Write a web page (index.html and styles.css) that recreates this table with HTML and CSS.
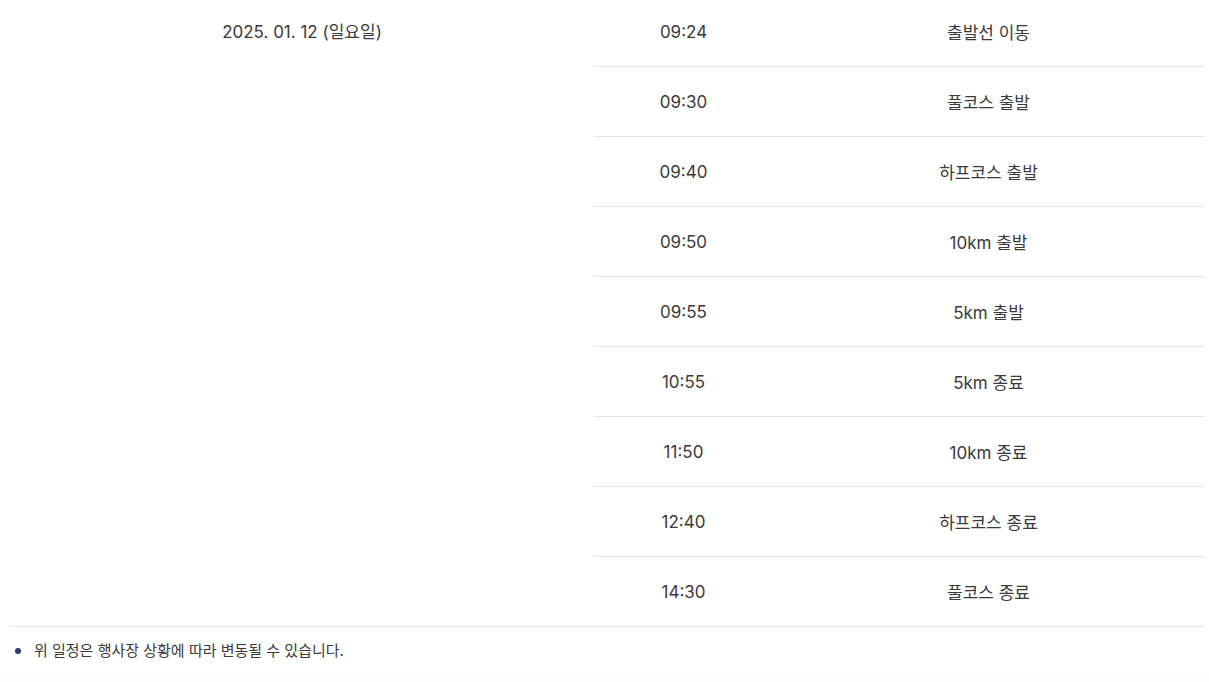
FILE: index.html
```html
<!DOCTYPE html>
<html lang="ko">
<head>
    <meta charset="UTF-8">
    <meta name="viewport" content="width=device-width, initial-scale=1.0">
    <title>대회 일정</title>
    <link rel="stylesheet" href="styles.css">
</head>
<body>
    <div class="schedule">
        <table class="scheduleTable">
            <tbody>
                <tr>
                    <td class="dateCell" rowspan="9">2025. 01. 12 (일요일)</td>
                    <td class="timeCell">09:24</td>
                    <td class="eventCell">출발선 이동</td>
                </tr>
                <tr>
                    <td class="timeCell">09:30</td>
                    <td class="eventCell">풀코스 출발</td>
                </tr>
                <tr>
                    <td class="timeCell">09:40</td>
                    <td class="eventCell">하프코스 출발</td>
                </tr>
                <tr>
                    <td class="timeCell">09:50</td>
                    <td class="eventCell">10km 출발</td>
                </tr>
                <tr>
                    <td class="timeCell">09:55</td>
                    <td class="eventCell">5km 출발</td>
                </tr>
                <tr>
                    <td class="timeCell">10:55</td>
                    <td class="eventCell">5km 종료</td>
                </tr>
                <tr>
                    <td class="timeCell">11:50</td>
                    <td class="eventCell">10km 종료</td>
                </tr>
                <tr>
                    <td class="timeCell">12:40</td>
                    <td class="eventCell">하프코스 종료</td>
                </tr>
                <tr>
                    <td class="timeCell">14:30</td>
                    <td class="eventCell">풀코스 종료</td>
                </tr>
            </tbody>
        </table>

        <ul class="notes">
            <li>위 일정은 행사장 상황에 따라 변동될 수 있습니다.</li>
        </ul>
    </div>
    <div class="nextSection"></div>
</body>
</html>
```

FILE: styles.css
```css
body, html {
    margin: 0;
    background: #fff;
    font-family: Inter, "Noto Sans CJK KR", sans-serif;
    color: #3a3a3a;
}

.schedule {
    padding: 0 5px 0 10px;
    margin-top: -3px;
}

.scheduleTable {
    width: 100%;
    border-collapse: collapse;
    font-size: 17px;
}

.scheduleTable td {
    height: 69px;
    padding: 0;
    text-align: center;
    vertical-align: middle;
    border-bottom: 1px solid #e4e4e4;
}

.dateCell {
    width: 584px;
    vertical-align: top !important;
    padding-top: 21px !important;
    height: auto;
}

.timeCell {
    width: 179px;
}

.notes {
    list-style: none;
    margin: 0;
    padding: 13px 0 14px 24px;
    font-size: 15px;
    line-height: 22px;
}

.notes li {
    position: relative;
}

/* navy dot in front of each note */
.notes li::before {
    content: "";
    position: absolute;
    left: -19px;
    top: 8px;
    width: 6px;
    height: 6px;
    border-radius: 50%;
    background: #2b3a6b;
}

.nextSection {
    height: 40px;
    background: #fcfcfc;
}
```
